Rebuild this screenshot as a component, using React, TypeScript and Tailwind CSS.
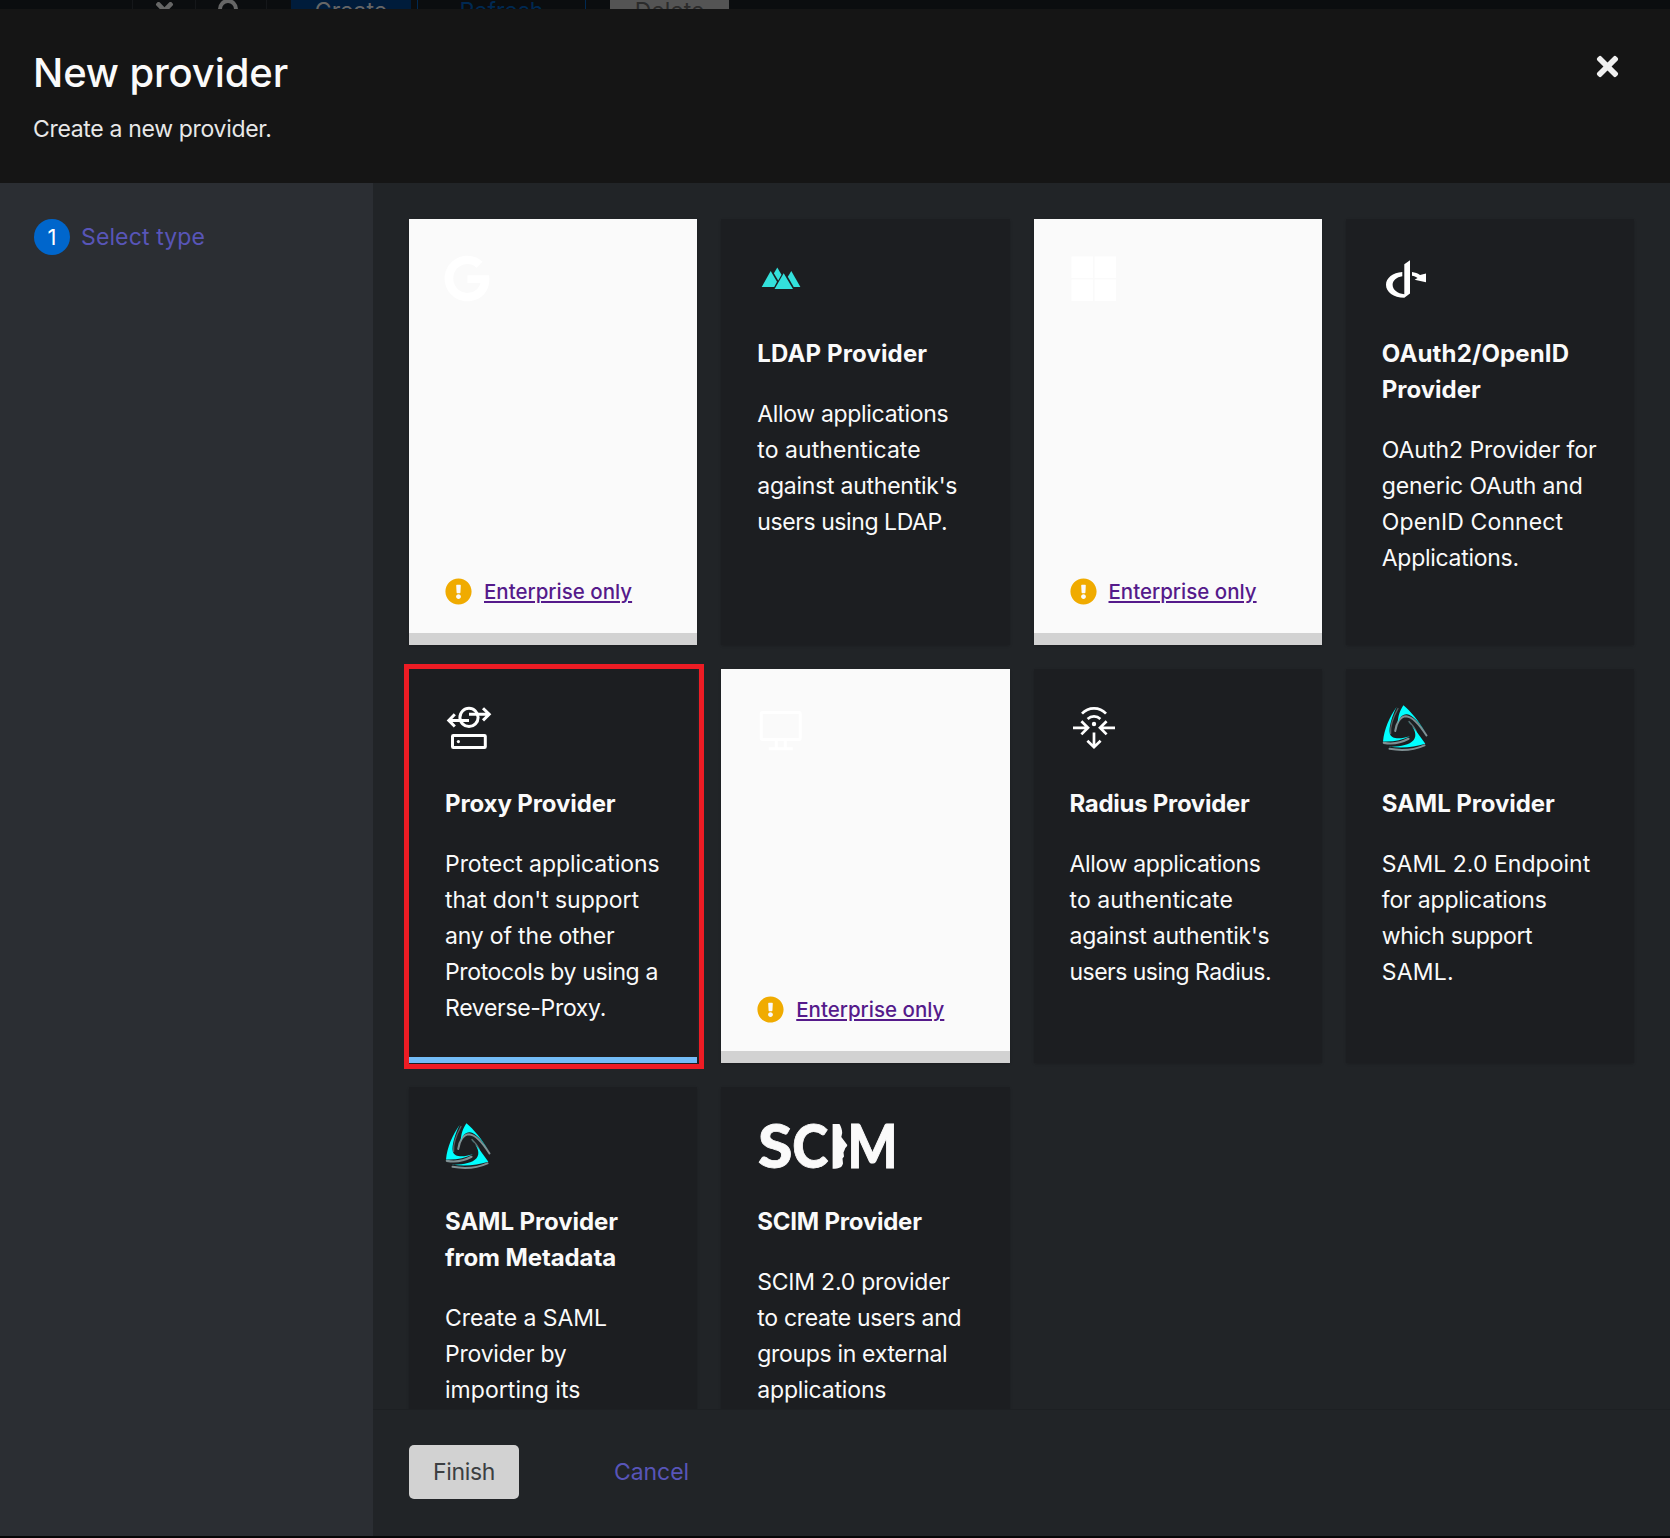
import React from "react";
import { FaExclamationCircle, FaGoogle, FaTimes } from "react-icons/fa";

type Line = [text: string, width: number];

let measureContext: CanvasRenderingContext2D | null = null;

function tracking(text: string, width: number, font: string) {
  measureContext ??= document.createElement("canvas").getContext("2d");
  if (!measureContext) return 0;
  measureContext.font = font;
  return (width - measureContext.measureText(text).width) / text.length;
}

/* One line of copy, letter-spaced so that it runs to the given width. */
function Fit({ text, width, font }: { text: string; width: number; font: string }) {
  return (
    <span
      className="block whitespace-nowrap"
      style={{ letterSpacing: `${tracking(text, width, font).toFixed(3)}px` }}
    >
      {text}
    </span>
  );
}

const BODY = '400 23px "Inter"';
const BOLD = '700 24px "Inter"';

function GoogleIcon() {
  return <FaGoogle className="h-[47px] w-[46px] -ml-px text-white" />;
}

function MicrosoftIcon() {
  return (
    <svg viewBox="0 0 48 48" className="size-12" fill="#fff">
      <path d="M1.5 1.5h21.5v21.5H1.5zM24.6 1.5h21.500v21.500H24.600zM1.500 24.600h21.500v21.500H1.500zM24.600 24.600h21.500v21.500H24.600z" />
    </svg>
  );
}

function LdapIcon() {
  return (
    <svg viewBox="0 0 48 48" className="size-12" fill="#33e1dc">
      <path d="M4.7 33 13.7 17 20 27.8 17.2 33z" />
      <path d="M20.3 13.5 24.5 20.8 21.2 26.4 16.9 19.2z" />
      <path d="M26.7 19.2 36 35H17.6z" />
      <path d="M34.3 17 43.4 33H36.7L30.8 22.8z" />
    </svg>
  );
}

function OpenIdIcon() {
  return (
    <svg viewBox="0 0 48 48" className="size-12" fill="#fff">
      <path d="M22.3 10.2 28 6.2V39.6L22.3 43.8C11.5 43.8 4 38 4 30.8 4 24 10.8 18.7 20.3 18V22.2C14.6 23 10.6 26.4 10.6 30.8 10.6 35.8 15.4 39.6 22.3 40.3z" />
      <path d="M30 18C33 18.4 35.6 19.4 38 20.9L44 19.6V28.2L32.6 25.8 35.6 24C34 22.9 32 22.1 30 21.8z" />
    </svg>
  );
}

function ProxyIcon() {
  return (
    <svg viewBox="0 0 48 48" className="size-12" fill="none" stroke="#fff" strokeWidth="3">
      <circle cx="24" cy="13.4" r="9.1" />
      <path d="M24 10.3H44M38 4.2 44.2 10.3 38 16.4" />
      <path d="M24 16.4H4M9.8 10.3 3.8 16.4 9.8 22.5" />
      <rect x="7.5" y="31.4" width="32.8" height="12.2" rx="0.8" />
      <circle cx="13.4" cy="37.6" r="1.6" fill="#fff" stroke="none" />
    </svg>
  );
}

function MonitorIcon() {
  return (
    <svg viewBox="0 0 48 48" className="size-12" fill="none" stroke="#fff" strokeWidth="3">
      <rect x="4.2" y="7.5" width="39" height="27" rx="1.2" />
      <path d="M19.2 36v7M28.2 36v7M11.7 43.8h24" />
    </svg>
  );
}

function RadiusIcon() {
  return (
    <svg viewBox="0 0 48 48" className="size-12" fill="none" stroke="#fff" strokeWidth="2.7">
      <path d="M12 9.6C18.4 2.7 29.6 2.7 36 9.6" />
      <path d="M17.6 15C21.2 11.6 26.8 11.6 30.4 15" />
      <circle cx="24" cy="20" r="2.2" fill="#fff" stroke="none" />
      <path d="M3 23.8H17M11.4 17.2 18 23.8 11.4 30.4" />
      <path d="M45 23.8H31M36.6 17.2 30 23.8 36.6 30.4" />
      <path d="M24 28.4V43M17.4 36.8 24 43.2 30.6 36.8" />
    </svg>
  );
}

function SamlIcon() {
  return (
    <svg viewBox="0 0 48 48" className="size-12" fill="none">
      <g stroke="#7f9093" strokeLinecap="round">
        <path d="M13.200 27C14.500 18.500 18.500 12.200 24 12.200 30 12.500 37.500 20.500 44.500 31.500" strokeWidth="2" />
        <path d="M16 4.500C11 13.500 8 22.500 8.600 29.500" strokeWidth="1.300" opacity="0.600" />
        <path d="M1.800 38.800C11 40.600 20 38.300 26.500 34.800" strokeWidth="2.200" />
        <path d="M7.500 44.800C19 46.800 32 46 42.500 41.300" strokeWidth="2" />
        <path d="M27 17.500C32.500 23 36.500 28 34.500 33" strokeWidth="1.200" opacity="0.700" />
      </g>
      <g fill="#0ff">
        <path d="M21.400 1.200C29 7.600 36.500 16.500 44.800 30.500 37 18 30.500 10.800 25 10.200 20.500 9.800 17.300 13.500 15.800 19 15.800 12.500 18 6 21.400 1.200z" />
        <path d="M14.700 2.800C7.500 13 2.200 25 1 37.500 11.500 38 20 36.300 28 32.300 18 35.300 9.500 35.500 7.800 29.500 6.500 24 10 12 14.700 2.800z" />
        <path d="M25.300 16.700C31 23 37.500 31 43.300 39.800 32 43.500 19 44.300 6.500 42.600 17 43.100 27 41.300 31.500 36.300 35.500 31 33 24.500 25.300 16.700z" />
      </g>
    </svg>
  );
}

function ScimIcon() {
  return (
    <svg
      viewBox="0 0 140 48"
      className="h-12 w-[140px] font-['Lato']"
      fill="#fafafa"
      stroke="#fafafa"
      fontSize="60"
      fontWeight="900"
    >
      <text x="1" y="45.500" strokeWidth="0.800" textLength="34.500" lengthAdjust="spacingAndGlyphs">S</text>
      <text x="35.300" y="45.500" strokeWidth="0.800" textLength="36" lengthAdjust="spacingAndGlyphs">C</text>
      <path
        stroke="none"
        d="M75.600 2H82.500C84 4.500 85.200 7.500 85.200 11L84.300 15 90.300 23C90.500 24.500 87.500 26 87.800 27.500L86.500 30.500 87 34.500 85.500 36.500 86 41.500C85 45.500 82.500 46.700 75.600 46.700z"
      />
      <text x="90.500" y="46" strokeWidth="1" textLength="50" lengthAdjust="spacingAndGlyphs">M</text>
    </svg>
  );
}

type Provider = {
  icon: () => React.ReactElement;
  enterprise?: boolean;
  selected?: boolean;
  title?: Line[];
  description?: Line[];
};

const providers: Provider[] = [
  { icon: GoogleIcon, enterprise: true },
  {
    icon: LdapIcon,
    title: [["LDAP Provider", 170]],
    description: [
      ["Allow applications", 191],
      ["to authenticate", 163.5],
      ["against authentik's", 200],
      ["users using LDAP.", 190],
    ],
  },
  { icon: MicrosoftIcon, enterprise: true },
  {
    icon: OpenIdIcon,
    title: [["OAuth2/OpenID", 187.5], ["Provider", 99]],
    description: [
      ["OAuth2 Provider for", 215],
      ["generic OAuth and", 201],
      ["OpenID Connect", 181.5],
      ["Applications.", 137],
    ],
  },
  {
    icon: ProxyIcon,
    selected: true,
    title: [["Proxy Provider", 170.5]],
    description: [
      ["Protect applications", 214.5],
      ["that don't support", 194],
      ["any of the other", 169.5],
      ["Protocols by using a", 213],
      ["Reverse-Proxy.", 161],
    ],
  },
  { icon: MonitorIcon, enterprise: true },
  {
    icon: RadiusIcon,
    title: [["Radius Provider", 180]],
    description: [
      ["Allow applications", 191],
      ["to authenticate", 163.5],
      ["against authentik's", 200],
      ["users using Radius.", 201.5],
    ],
  },
  {
    icon: SamlIcon,
    title: [["SAML Provider", 173]],
    description: [
      ["SAML 2.0 Endpoint", 208.5],
      ["for applications", 165],
      ["which support", 150.5],
      ["SAML.", 72],
    ],
  },
  {
    icon: SamlIcon,
    title: [["SAML Provider", 173], ["from Metadata", 171]],
    description: [
      ["Create a SAML", 162],
      ["Provider by", 121.5],
      ["importing its", 135.5],
      ["metadata.", 103],
    ],
  },
  {
    icon: ScimIcon,
    title: [["SCIM Provider", 164.5]],
    description: [
      ["SCIM 2.0 provider", 192.5],
      ["to create users and", 204],
      ["groups in external", 190],
      ["applications", 129],
    ],
  },
];

function ProviderCard({ icon: Icon, enterprise, selected, title, description }: Provider) {
  if (enterprise) {
    return (
      <div className="flex flex-col justify-between border-b-[12px] border-[#d2d2d2] bg-[#fafafa] px-9 pt-9 pb-6 shadow-sm">
        <Icon />
        <div className="flex h-[34px] items-center gap-3">
          <FaExclamationCircle className="-mt-px size-[27px] text-[#f0ab00]" />
          <a className="mt-px text-[20.5px] font-medium text-[#551a8b] underline decoration-2 underline-offset-2">
            Enterprise only
          </a>
        </div>
      </div>
    );
  }
  return (
    <div className="relative flex flex-col bg-[#1c1e21] px-9 pt-9 text-[23px] leading-9 text-[#fafafa] shadow-sm">
      <div className="-mt-px">
        <Icon />
      </div>
      <div className="mt-[34px] text-[24px] font-bold">
        {title?.map(([t, w]) => <Fit key={t} text={t} width={w} font={BOLD} />)}
      </div>
      <div className="mt-6">
        {description?.map(([t, w]) => <Fit key={t} text={t} width={w} font={BODY} />)}
      </div>
      {selected && (
        <>
          <div className="absolute inset-x-0 bottom-0 h-1.5 bg-[#73bcf7]" />
          <div className="absolute -top-[5px] -right-[6.75px] -bottom-1.5 -left-[5px] border-[5px] border-[#ed1c24]" />
        </>
      )}
    </div>
  );
}

/* The page behind the dialog, of which only a dimmed strip shows. */
function Backdrop() {
  return (
    <div className="flex h-[9px] shrink-0 overflow-hidden bg-[#0b0d0f] text-[23px] leading-9">
      <div className="ml-[132px] flex w-[64px] justify-center border-x border-[#15171a]">
        <FaTimes className="-mt-0.5 size-[25px] shrink-0 text-[#666]" />
      </div>
      <div className="flex w-[71px] border-r border-[#15171a] pl-[22px]">
        <div className="-mt-px size-5 shrink-0 rounded-full border-4 border-[#666]" />
      </div>
      <div className="-mt-[7px] ml-6 h-9 w-[120px] bg-[#001c3b] text-center text-[#666]">Create</div>
      <div className="-mt-[7px] ml-[6px] h-9 w-[169px] border-x border-[#002952] text-center text-[#002952]">Refresh</div>
      <div className="-mt-[7px] ml-6 h-9 w-[119px] bg-[#545454] text-center text-[#2b2b2b]">Delete</div>
    </div>
  );
}

export default function App() {
  return (
    <div className="flex h-[1538px] w-[1670px] flex-col overflow-hidden bg-[#050607] font-['Inter',sans-serif]">
      <Backdrop />
      <header className="flex h-[174px] shrink-0 justify-between bg-[#151515] pr-[51px] pl-[33px]">
        <div>
          <h1 className="mt-[37px] text-[40px] leading-[54px] font-medium text-[#fafafa]">
            <Fit text="New provider" width={255} font={'500 40px "Inter"'} />
          </h1>
          <p className="mt-[11px] text-[23px] leading-9 text-[#e8e8e8]">
            <Fit text="Create a new provider." width={238.5} font={BODY} />
          </p>
        </div>
        <FaTimes className="mt-[42px] h-[31px] w-[23px] text-[#f0f0f0]" />
      </header>
      <div className="flex h-[1353px] shrink-0">
        <nav className="w-[373px] shrink-0 bg-[#2b2e33] pt-9 pl-[34px]">
          <div className="flex items-center gap-[11px] text-[23px] leading-9 text-[#5855b8]">
            <span className="size-9 rounded-full bg-[#0066cc] text-center text-[22px] text-white">1</span>
            <Fit text="Select type" width={124} font={BODY} />
          </div>
        </nav>
        <div className="flex min-w-0 flex-1 flex-col bg-[#212427]">
          <main className="grid h-[1226px] shrink-0 grid-cols-4 grid-rows-[426px_394px_430px] gap-6 overflow-hidden pt-9 pr-9 pl-9">
            {providers.map((p, i) => (
              <ProviderCard key={i} {...p} />
            ))}
          </main>
          <footer className="flex flex-1 items-start border-t border-[#1d2023] pt-[35px] pl-9 text-[23px] leading-[54px]">
            <button className="flex h-[54px] w-[110px] justify-center rounded-[5px] bg-[#d2d2d2] text-[#3c3f42]">
              <Fit text="Finish" width={62} font={BODY} />
            </button>
            <button className="ml-[95px] text-[#5855b8]">
              <Fit text="Cancel" width={75} font={BODY} />
            </button>
          </footer>
        </div>
      </div>
    </div>
  );
}
